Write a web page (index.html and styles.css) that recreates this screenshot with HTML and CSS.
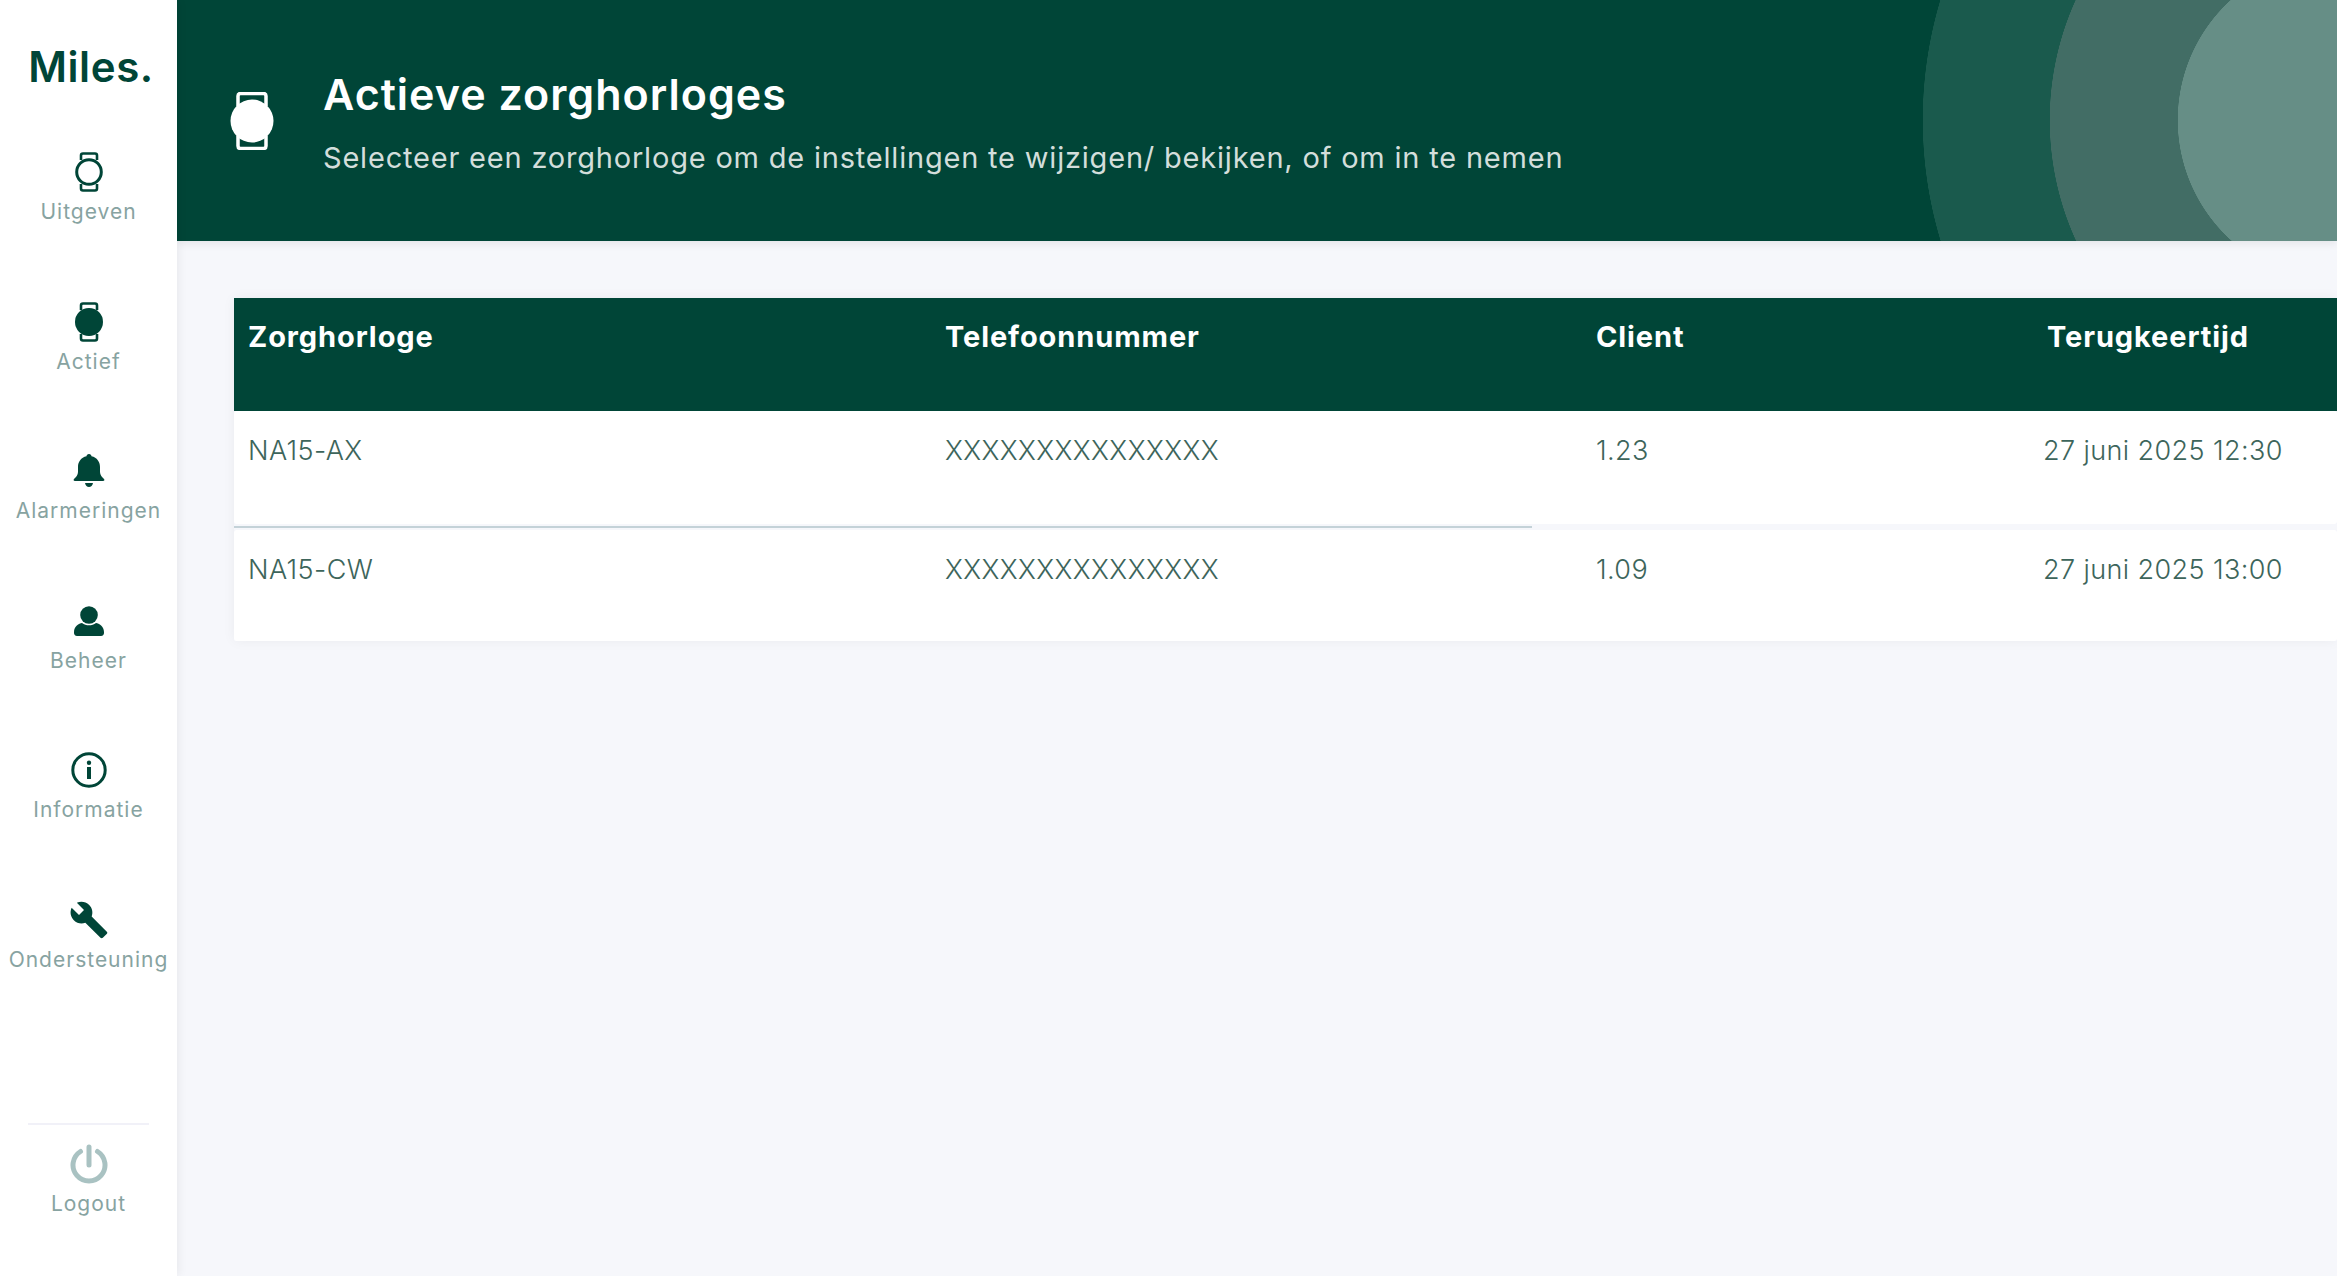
FILE: index.html
```html
<!DOCTYPE html>
<html lang="nl">
<head>
  <meta charset="UTF-8">
  <meta name="viewport" content="width=device-width, initial-scale=1.0">
  <title>Actieve zorghorloges - Miles.</title>
  <link rel="stylesheet" href="styles.css">
</head>
<body>
  <aside class="sidebar">
    <div class="logo">Miles.</div>
    <nav class="nav">
      <a class="nav-item">
        <svg class="nav-icon" width="30" height="40" viewBox="0 0 30 40">
          <path d="M7 8V3.500q0-2 2-2h12q2 0 2 2V8M7 32v4.500q0 2 2 2h12q2 0 2-2V32" fill="none" stroke="#004537" stroke-width="2.600"/>
          <circle cx="15" cy="20" r="12.300" fill="none" stroke="#004537" stroke-width="3"/>
        </svg>
        <span>Uitgeven</span>
      </a>
      <a class="nav-item">
        <svg class="nav-icon" width="30" height="40" viewBox="0 0 30 40">
          <path d="M7 8V3.500q0-2 2-2h12q2 0 2 2V8M7 32v4.500q0 2 2 2h12q2 0 2-2V32" fill="none" stroke="#004537" stroke-width="2.600"/>
          <circle cx="15" cy="20" r="14" fill="#004537"/>
        </svg>
        <span>Actief</span>
      </a>
      <a class="nav-item">
        <svg class="nav-icon" width="32" height="40" viewBox="0 0 32 40">
          <path fill="#004537" d="M16 3c-1.500 0-2.500 1-2.500 2.300C8 6.500 5 11 5 16v5c0 3-2 5-4 7-.8.8-.5 2 1 2h28c1.500 0 1.800-1.200 1-2-2-2-4-4-4-7v-5c0-5-3-9.500-8.500-10.700C18.500 4 17.500 3 16 3z"/>
          <path fill="#004537" d="M12 32h8c-.5 2.500-2 4-4 4s-3.500-1.500-4-4z"/>
        </svg>
        <span>Alarmeringen</span>
      </a>
      <a class="nav-item">
        <svg class="nav-icon" width="30" height="40" viewBox="0 0 30 40">
          <circle cx="15" cy="14" r="8.800" fill="#004537"/>
          <path fill="#004537" d="M0 31c0-6 5-8.500 8-9 2 1.500 4.500 2.300 7 2.300s5-.8 7-2.300c3 .5 8 3 8 9v1c0 1.500-1 3-3 3H3c-2 0-3-1.500-3-3z"/>
        </svg>
        <span>Beheer</span>
      </a>
      <a class="nav-item">
        <svg class="nav-icon" width="36" height="40" viewBox="0 0 36 40">
          <circle cx="18" cy="20" r="16.200" fill="none" stroke="#004537" stroke-width="3"/>
          <circle cx="18" cy="12.800" r="2.200" fill="#004537"/>
          <rect x="16" y="17" width="4" height="12" fill="#004537"/>
        </svg>
        <span>Informatie</span>
      </a>
      <a class="nav-item">
        <svg class="nav-icon" width="40" height="40" viewBox="0 0 24 24">
          <path fill="#004537" d="M22.700 19l-9.100-9.100c.9-2.300.4-5-1.500-6.900-2-2-5-2.400-7.400-1.300L9 6 6 9 1.600 4.700C.4 7.100.9 10.100 2.900 12.100c1.900 1.900 4.600 2.400 6.900 1.500l9.100 9.100c.4.4 1 .4 1.400 0l2.300-2.300c.5-.4.5-1.100.1-1.400z"/>
        </svg>
        <span>Ondersteuning</span>
      </a>
    </nav>
    <div class="sidebar-bottom">
      <a class="nav-item">
        <svg class="nav-icon" width="38" height="40" viewBox="0 0 38 40">
          <path d="M10.500 7.500a16 16 0 1 0 17 0" fill="none" stroke="#a9c2c2" stroke-width="5" stroke-linecap="round"/>
          <path d="M19 3v18" fill="none" stroke="#a9c2c2" stroke-width="5" stroke-linecap="round"/>
        </svg>
        <span>Logout</span>
      </a>
    </div>
  </aside>

  <div class="main">
    <header class="banner">
      <svg class="banner-icon" width="44" height="58" viewBox="0 0 44 58">
        <path d="M8 14V4q0-2.500 2.500-2.500h23Q36 1.500 36 4v10M8 44v10q0 2.500 2.500 2.500h23Q36 56.500 36 54V44" fill="none" stroke="#fff" stroke-width="3.500"/>
        <circle cx="22" cy="29" r="21.500" fill="#fff"/>
      </svg>
      <div class="banner-text">
        <h1>Actieve zorghorloges</h1>
        <p>Selecteer een zorghorloge om de instellingen te wijzigen/ bekijken, of om in te nemen</p>
      </div>
    </header>

    <section class="content">
      <div class="watch-table">
        <div class="row row-head">
          <div>Zorghorloge</div>
          <div>Telefoonnummer</div>
          <div>Client</div>
          <div class="col-time">Terugkeertijd</div>
        </div>
        <div class="row">
          <div>NA15-AX</div>
          <div>XXXXXXXXXXXXXXX</div>
          <div>1.23</div>
          <div>27 juni 2025 12:30</div>
        </div>
        <div class="row-line"></div>
        <div class="row">
          <div>NA15-CW</div>
          <div>XXXXXXXXXXXXXXX</div>
          <div>1.09</div>
          <div>27 juni 2025 13:00</div>
        </div>
      </div>
    </section>
  </div>
</body>
</html>
```

FILE: styles.css
```css
body {
  margin: 0;
  height: 100vh;
  display: flex;
  overflow: hidden;
  font-family: Inter, "Open Sans", sans-serif;
  background-color: #f6f7fb;
}

/* sidebar */
.sidebar {
  width: 177px;
  flex-shrink: 0;
  display: flex;
  flex-direction: column;
  background: white;
  box-shadow: 2px 0 9px rgba(0, 0, 0, 0.06);
  z-index: 2;
}
.logo {
  margin-top: 42px;
  height: 50px;
  padding-left: 5px;
  text-align: center;
  font-size: 42px;
  line-height: 50px;
  font-weight: 600;
  letter-spacing: 0.6px;
  color: #004537;
}
.nav {
  margin-top: 60px;
  display: flex;
  flex-direction: column;
  gap: 77.6px;
}
.nav-item {
  display: flex;
  flex-direction: column;
  align-items: center;
  gap: 8px;
  font-size: 21px;
  line-height: 24px;
  letter-spacing: 1px;
  color: #87a3a1;
}
.sidebar-bottom {
  margin: auto 28px 60px 28px;
  padding-top: 19px;
  border-top: 2px solid #f1f1f8;
}

/* banner */
.main {
  flex: 1;
  min-width: 0;
  display: flex;
  flex-direction: column;
}
.banner {
  height: 241px;
  flex-shrink: 0;
  display: flex;
  align-items: center;
  gap: 49px;
  padding-left: 53px;
  color: white;
  background-color: #004537;
  background-image: radial-gradient(circle at 2163px 120px, #668e86 162px, #426d65 162.500px, #426d65 290px, #1a5a4d 290.500px, #1a5a4d 417px, transparent 417.500px);
  box-shadow: 0 3px 8px rgba(0, 0, 0, 0.07);
}
.banner-text {
  margin-top: 4px;
}
.banner-text h1 {
  margin: 0 0 21px 0;
  font-size: 43px;
  line-height: 50px;
  font-weight: 600;
  letter-spacing: 1px;
}
.banner-text p {
  margin: 0;
  font-size: 29px;
  line-height: 36px;
  letter-spacing: 0.8px;
  color: #d3dedb;
}

/* tabel */
.content {
  flex: 1;
  padding: 57px 0 0 57px;
}
.watch-table {
  width: 2103px;
  box-shadow: 0 0 12px rgba(0, 0, 0, 0.05);
}
.row {
  display: grid;
  grid-template-columns: 697px 651px 447px 1fr;
  height: 113px;
  padding: 22px 0 0 14px;
  box-sizing: border-box;
  background: white;
  font-size: 27px;
  line-height: 36px;
  font-weight: 300;
  letter-spacing: 0.4px;
  color: #3d655b;
  border-radius: 3px;
}
.row:last-child {
  height: 111px;
}
.row-head {
  padding-top: 21px;
  border-radius: 0;
  background-color: #004537;
  color: white;
  font-size: 29px;
  font-weight: 700;
  letter-spacing: 0.9px;
}
.col-time {
  padding-left: 4px;
}
.row-line {
  width: 1298px;
  height: 2px;
  margin: 2px 0;
  background-color: #c4d2d8;
}
```
